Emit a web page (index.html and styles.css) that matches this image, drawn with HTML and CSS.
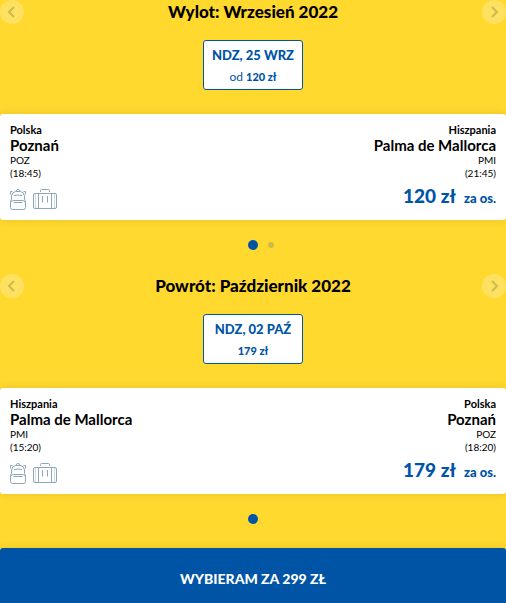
FILE: index.html
```html
<!DOCTYPE html>
<html lang="pl">
<head>
  <meta charset="UTF-8">
  <title>Wybór lotu</title>
  <meta name="viewport" content="width=device-width, initial-scale=1.0">
  <link rel="stylesheet" href="styles.css">
</head>
<body>
  <!-- Ikony bagażu -->
  <svg class="sprite" aria-hidden="true">
    <symbol id="plecak" viewBox="0 0 16 21">
      <path d="M1.500 10V7Q2 3 5.500 2.500H10.500Q14 3 14.500 7V10M1.500 10Q.5 12 .5 14V18.500Q.5 20.500 2.500 20.500H13.500Q15.500 20.500 15.500 18.500V14Q15.500 12 14.500 10"/>
      <path d="M6 2.500Q6 .5 8 .5Q10 .5 10 2.500M.5 5.500V2.500H2.500M15.500 5.500V2.500H13.500M4 6.500Q8 5.500 12 6.500M1 13Q1.500 11.500 3.500 11.500H12.500Q14.500 11.500 15 13M3.500 13.500H12.500"/>
    </symbol>
    <symbol id="walizka" viewBox="0 0 24 21">
      <rect x=".5" y="4.500" width="23" height="15" rx="1.500"/>
      <path d="M7.500 3V1.500Q7.500 .5 8.500 .5H15.500Q16.500 .5 16.500 1.500V3M5.500 4.500V19.500M18.500 4.500V19.500M9.500 7V13.500M14.500 7V13.500"/>
      <path opacity=".4" d="M2.500 4.500V19.500M21.500 4.500V19.500"/>
    </symbol>
    <symbol id="strzalka" viewBox="0 0 24 24">
      <path d="M14 7L9 12L14 17"/>
    </symbol>
  </svg>

  <main>
    <section class="flight">
      <header class="month">
        <button class="arrow" type="button" aria-label="Poprzedni miesiąc"><svg><use href="#strzalka"/></svg></button>
        <h2>Wylot: Wrzesień 2022</h2>
        <button class="arrow next" type="button" aria-label="Następny miesiąc"><svg><use href="#strzalka"/></svg></button>
      </header>
      <button class="date" type="button">
        <span class="day">NDZ, 25 WRZ</span>
        <span class="from">od <b>120 zł</b></span>
      </button>
      <article class="card">
        <div class="place">
          <p class="country">Polska</p>
          <p class="city">Poznań</p>
          <p>POZ</p>
          <p>(18:45)</p>
          <div class="luggage">
            <svg class="backpack"><use href="#plecak"/></svg>
            <svg class="suitcase"><use href="#walizka"/></svg>
          </div>
        </div>
        <div class="place arrival">
          <p class="country">Hiszpania</p>
          <p class="city">Palma de Mallorca</p>
          <p>PMI</p>
          <p>(21:45)</p>
          <p class="price"><strong>120 zł</strong> <span>za os.</span></p>
        </div>
      </article>
      <div class="dots">
        <button class="dot active" type="button" aria-label="Lot 1"></button>
        <button class="dot" type="button" aria-label="Lot 2"></button>
      </div>
    </section>

    <section class="flight">
      <header class="month">
        <button class="arrow" type="button" aria-label="Poprzedni miesiąc"><svg><use href="#strzalka"/></svg></button>
        <h2>Powrót: Październik 2022</h2>
        <button class="arrow next" type="button" aria-label="Następny miesiąc"><svg><use href="#strzalka"/></svg></button>
      </header>
      <button class="date" type="button">
        <span class="day">NDZ, 02 PAŹ</span>
        <span class="from"><b>179 zł</b></span>
      </button>
      <article class="card">
        <div class="place">
          <p class="country">Hiszpania</p>
          <p class="city">Palma de Mallorca</p>
          <p>PMI</p>
          <p>(15:20)</p>
          <div class="luggage">
            <svg class="backpack"><use href="#plecak"/></svg>
            <svg class="suitcase"><use href="#walizka"/></svg>
          </div>
        </div>
        <div class="place arrival">
          <p class="country">Polska</p>
          <p class="city">Poznań</p>
          <p>POZ</p>
          <p>(18:20)</p>
          <p class="price"><strong>179 zł</strong> <span>za os.</span></p>
        </div>
      </article>
      <div class="dots">
        <button class="dot active" type="button" aria-label="Lot 1"></button>
      </div>
    </section>
  </main>

  <button class="choose" type="button">WYBIERAM ZA 299 ZŁ</button>
</body>
</html>
```
FILE: styles.css
```css
* {
  box-sizing: border-box;
}

body {
  margin: 0;
  background: #ffd92e;
  color: #000;
  font-family: Lato, "Noto Sans", sans-serif;
}

button {
  padding: 0;
  border: 0;
  font-family: inherit;
  cursor: pointer;
}

h2, p {
  margin: 0;
}

svg {
  display: block;
  fill: none;
}

.sprite {
  display: none;
}

.flight {
  display: flex;
  flex-direction: column;
  align-items: center;
  padding-bottom: 24px;
}

.month {
  display: flex;
  align-items: center;
  justify-content: space-between;
  width: 100%;
  height: 24px;
}

.month h2 {
  font-size: 17px;
  font-weight: 900;
  line-height: 24px;
}

.arrow {
  width: 24px;
  height: 24px;
  border-radius: 50%;
  background: #ffe162;
}

.arrow svg {
  width: 24px;
  height: 24px;
  stroke: #c9bb4c;
  stroke-width: 2;
}

.next svg {
  transform: scaleX(-1);
}

.date {
  display: flex;
  flex-direction: column;
  align-items: center;
  justify-content: center;
  gap: 4px;
  width: 100px;
  height: 50px;
  margin-top: 16px;
  border: 1px solid #0054a6;
  border-radius: 3px;
  background: #fff;
  color: #0054a6;
}

.day {
  font-size: 13px;
  font-weight: 900;
  line-height: 20px;
}

.from {
  font-size: 12px;
  line-height: 16px;
}

.from b {
  margin-left: 3px;
  font-size: 11px;
  font-weight: 900;
}

.from b:first-child {
  margin-left: 0;
}

.card {
  display: flex;
  justify-content: space-between;
  width: 100%;
  margin-top: 24px;
  padding: 9px 10px 10px;
  border-radius: 3px;
  background: #fff;
  box-shadow: 0 0 10px rgba(0, 0, 0, 0.1);
}

.place {
  font-size: 10px;
  line-height: 13px;
}

.arrival {
  text-align: right;
}

.country {
  font-size: 11px;
  font-weight: bold;
}

.city {
  font-size: 15px;
  font-weight: bold;
  line-height: 18px;
}

.luggage {
  display: flex;
  gap: 7px;
  margin-top: 9px;
  stroke: #8fa5bc;
}

.backpack {
  width: 16px;
  height: 21px;
}

.suitcase {
  width: 24px;
  height: 21px;
}

.price {
  display: flex;
  align-items: baseline;
  justify-content: flex-end;
  gap: 8px;
  margin-top: 4px;
  color: #0054a6;
  font-size: 13px;
  font-weight: 900;
  line-height: 24px;
}

.price strong {
  font-size: 19px;
  font-weight: 900;
}

/* aktywna kropka zostaje na środku */
.dots {
  display: grid;
  grid-template-columns: 1fr 10px 1fr;
  align-items: center;
  column-gap: 10px;
  width: 100%;
  height: 10px;
  margin-top: 20px;
}

.dot {
  width: 6px;
  height: 6px;
  border-radius: 50%;
  background: #ccbe4d;
}

.active {
  grid-column: 2;
  width: 10px;
  height: 10px;
  background: #0054a6;
}

.choose {
  display: block;
  width: 100%;
  height: 55px;
  padding-top: 6px;
  border-radius: 3px 3px 0 0;
  background: #0054a6;
  box-shadow: 0 0 10px rgba(0, 0, 0, 0.1);
  color: #fff;
  font-size: 14px;
  font-weight: 900;
}
```
